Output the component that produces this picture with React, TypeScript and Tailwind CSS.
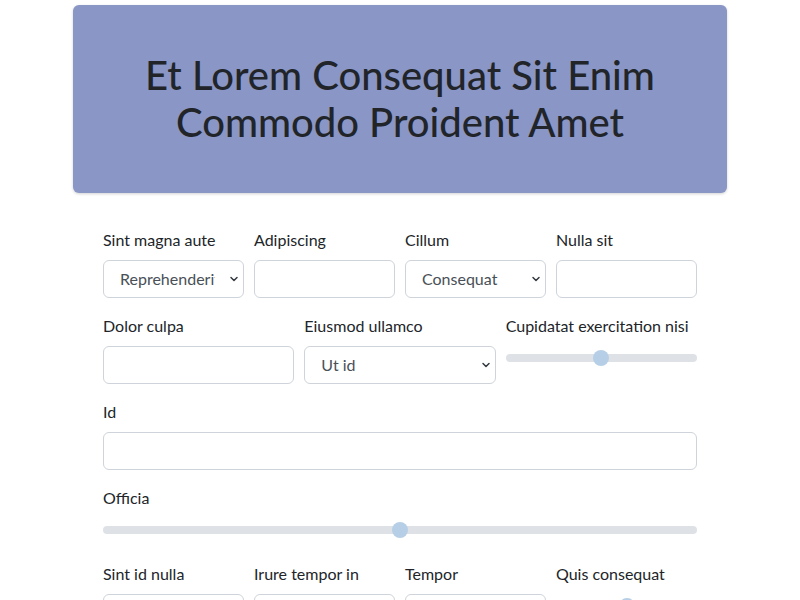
import React, { useState } from 'react';

const FONT = 'font-["Lato",sans-serif]';

function Label({ children }: { children: React.ReactNode }) {
  return <label className="mb-2 block whitespace-nowrap text-base leading-6 text-[#212529]">{children}</label>;
}

function TextInput() {
  return (
    <input
      type="text"
      className="block h-[38px] w-full rounded-md border border-[#ced4da] bg-white px-3 text-base text-[#212529] outline-none"
    />
  );
}

function Select({ options }: { options: string[] }) {
  return (
    <div className="relative">
      <select className="block h-[38px] w-full appearance-none rounded-md border border-[#ced4da] bg-white pl-4 pr-7 text-base text-[#495057] outline-none">
        {options.map(o => (
          <option key={o}>{o}</option>
        ))}
      </select>
      <svg
        className="pointer-events-none absolute right-[5px] top-1/2 -translate-y-1/2"
        width="10"
        height="8"
        viewBox="0 0 16 16"
      >
        <path d="M2 5l6 6 6-6" fill="none" stroke="#343a40" strokeWidth="3" strokeLinecap="round" strokeLinejoin="round" />
      </svg>
    </div>
  );
}

function Range({ start = 50 }: { start?: number }) {
  const [v, setV] = useState(start);
  return (
    <input
      type="range"
      min={0}
      max={100}
      value={v}
      onChange={e => setV(Number(e.target.value))}
      className="block h-6 w-full cursor-pointer appearance-none bg-transparent [&::-webkit-slider-runnable-track]:h-2 [&::-webkit-slider-runnable-track]:rounded-full [&::-webkit-slider-runnable-track]:bg-[#dee2e6] [&::-webkit-slider-thumb]:-mt-1 [&::-webkit-slider-thumb]:h-4 [&::-webkit-slider-thumb]:w-4 [&::-webkit-slider-thumb]:appearance-none [&::-webkit-slider-thumb]:rounded-full [&::-webkit-slider-thumb]:bg-[#b6cfe6]"
    />
  );
}

function Field({ label, children }: { label: string; children: React.ReactNode }) {
  return (
    <div className="min-w-0 flex-1">
      <Label>{label}</Label>
      {children}
    </div>
  );
}

export default function App() {
  return (
    <div className={`${FONT} min-h-screen bg-white text-[#212529]`}>
      <div className="mx-auto w-[654px] pt-[5px]">
        <div className="rounded-md bg-[#8a96c6] py-[47px] text-center shadow-[0_1px_3px_rgba(0,0,0,0.18)]">
          <h1 className="px-4 text-[40px] font-medium leading-[1.18] text-[#212529]">
            Et Lorem Consequat Sit Enim<br />Commodo Proident Amet
          </h1>
        </div>

        <form className="px-[30px] pt-[35px]" onSubmit={e => e.preventDefault()}>
          <div className="mb-4 flex gap-[10px]">
            <Field label="Sint magna aute">
              <Select options={['Reprehenderit', 'Aliqua', 'Minim']} />
            </Field>
            <Field label="Adipiscing">
              <TextInput />
            </Field>
            <Field label="Cillum">
              <Select options={['Consequat', 'Labore', 'Dolore']} />
            </Field>
            <Field label="Nulla sit">
              <TextInput />
            </Field>
          </div>

          <div className="mb-4 flex gap-[10px]">
            <Field label="Dolor culpa">
              <TextInput />
            </Field>
            <Field label="Eiusmod ullamco">
              <Select options={['Ut id', 'Velit', 'Esse']} />
            </Field>
            <Field label="Cupidatat exercitation nisi">
              <Range />
            </Field>
          </div>

          <div className="mb-4">
            <Field label="Id">
              <TextInput />
            </Field>
          </div>

          <div className="mb-5">
            <Field label="Officia">
              <Range />
            </Field>
          </div>

          <div className="mb-4 flex gap-[10px]">
            <Field label="Sint id nulla">
              <TextInput />
            </Field>
            <Field label="Irure tempor in">
              <TextInput />
            </Field>
            <Field label="Tempor">
              <TextInput />
            </Field>
            <Field label="Quis consequat">
              <Range />
            </Field>
          </div>
        </form>
      </div>
    </div>
  );
}
